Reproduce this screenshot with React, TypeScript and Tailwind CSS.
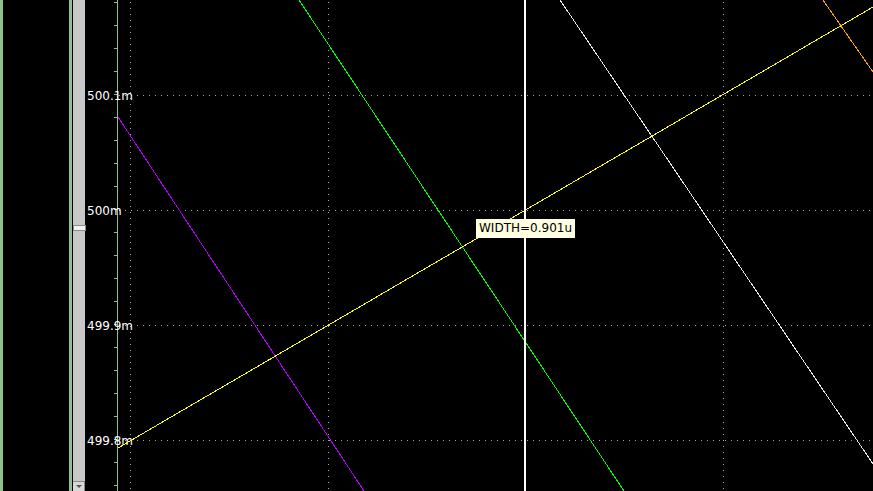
import React from 'react';

const majorTicks = [
  { y: 95, label: '500.1m' },
  { y: 210, label: '500m' },
  { y: 325, label: '499.9m' },
  { y: 440, label: '499.8m' },
];

const gridX = [130, 328, 524, 723];

// page coordinates, the svg viewBox is offset to match
const traces = [
  { color: '#b400ff', x1: 118, y1: 117, x2: 364, y2: 491 },
  { color: '#00ff00', x1: 299, y1: 0, x2: 624, y2: 491 },
  { color: '#ffff00', x1: 118, y1: 448, x2: 873, y2: 7 },
  { color: '#e6e6e6', x1: 560, y1: 0, x2: 873, y2: 464 },
  { color: '#ffa500', x1: 823, y1: 0, x2: 873, y2: 72 },
];

function Plot() {
  const minor: number[] = [];
  for (let y = 2; y < 491; y += 23) minor.push(y);

  return (
    <div className="relative flex-1 h-full">
      <svg className="block w-full h-full" viewBox="85 0 788 491" preserveAspectRatio="none">
        {majorTicks.map(t => (
          <line key={t.y} x1={119} y1={t.y + 0.5} x2={873} y2={t.y + 0.5} stroke="#a8a8a8" strokeDasharray="1 5" shapeRendering="crispEdges" />
        ))}
        {gridX.map(x => (
          <line key={x} x1={x + 0.5} y1={2} x2={x + 0.5} y2={491} stroke="#a8a8a8" strokeDasharray="1 5" shapeRendering="crispEdges" />
        ))}
        <line x1={117.5} y1={0} x2={117.5} y2={491} stroke="#8fbf8f" shapeRendering="crispEdges" />
        {minor.map(y => (
          <line key={y} x1={114} y1={y + 0.5} x2={117} y2={y + 0.5} stroke="#8fbf8f" shapeRendering="crispEdges" />
        ))}
        {majorTicks.map(t => (
          <text key={t.label} x={87} y={t.y + 5} fill="#ffffff" fontSize={12} fontFamily="'DejaVu Sans', sans-serif">
            {t.label}
          </text>
        ))}
        {traces.map(tr => (
          <line key={tr.color} x1={tr.x1} y1={tr.y1} x2={tr.x2} y2={tr.y2} stroke={tr.color} strokeWidth={1} shapeRendering="crispEdges" />
        ))}
        <line x1={525} y1={0} x2={525} y2={491} stroke="#ffffff" strokeWidth={2} shapeRendering="crispEdges" />
      </svg>
      <div className="absolute left-[391px] top-[219px] h-[19px] px-[3px] bg-[#ffffe1] text-black text-[12px] leading-[19px] whitespace-nowrap font-['DejaVu_Sans',sans-serif]">
        WIDTH=0.901u
      </div>
    </div>
  );
}

export default function App() {
  return (
    <div className="flex w-[873px] h-[491px] bg-black overflow-hidden">
      <div className="w-[3px] bg-[#8fbf8f]" />
      <div className="w-[66px]" />
      <div className="w-[3px] bg-[#8fbf8f]" />
      <div className="w-[1px]" />
      <div className="w-[12px] flex flex-col bg-[#c8c8c8]">
        <div className="mt-[225px] h-[6px] bg-[#f2f2f2] border border-[#8c8c8c] w-[13px]" />
        <div className="flex-1" />
        <div className="h-[10px] bg-[#d8d8d8] border-t border-r border-[#8a8a8a] flex items-center justify-center">
          <div className="w-0 h-0 border-l-[3px] border-r-[3px] border-t-[3px] border-l-transparent border-r-transparent border-t-[#555555]" />
        </div>
      </div>
      <Plot />
    </div>
  );
}
